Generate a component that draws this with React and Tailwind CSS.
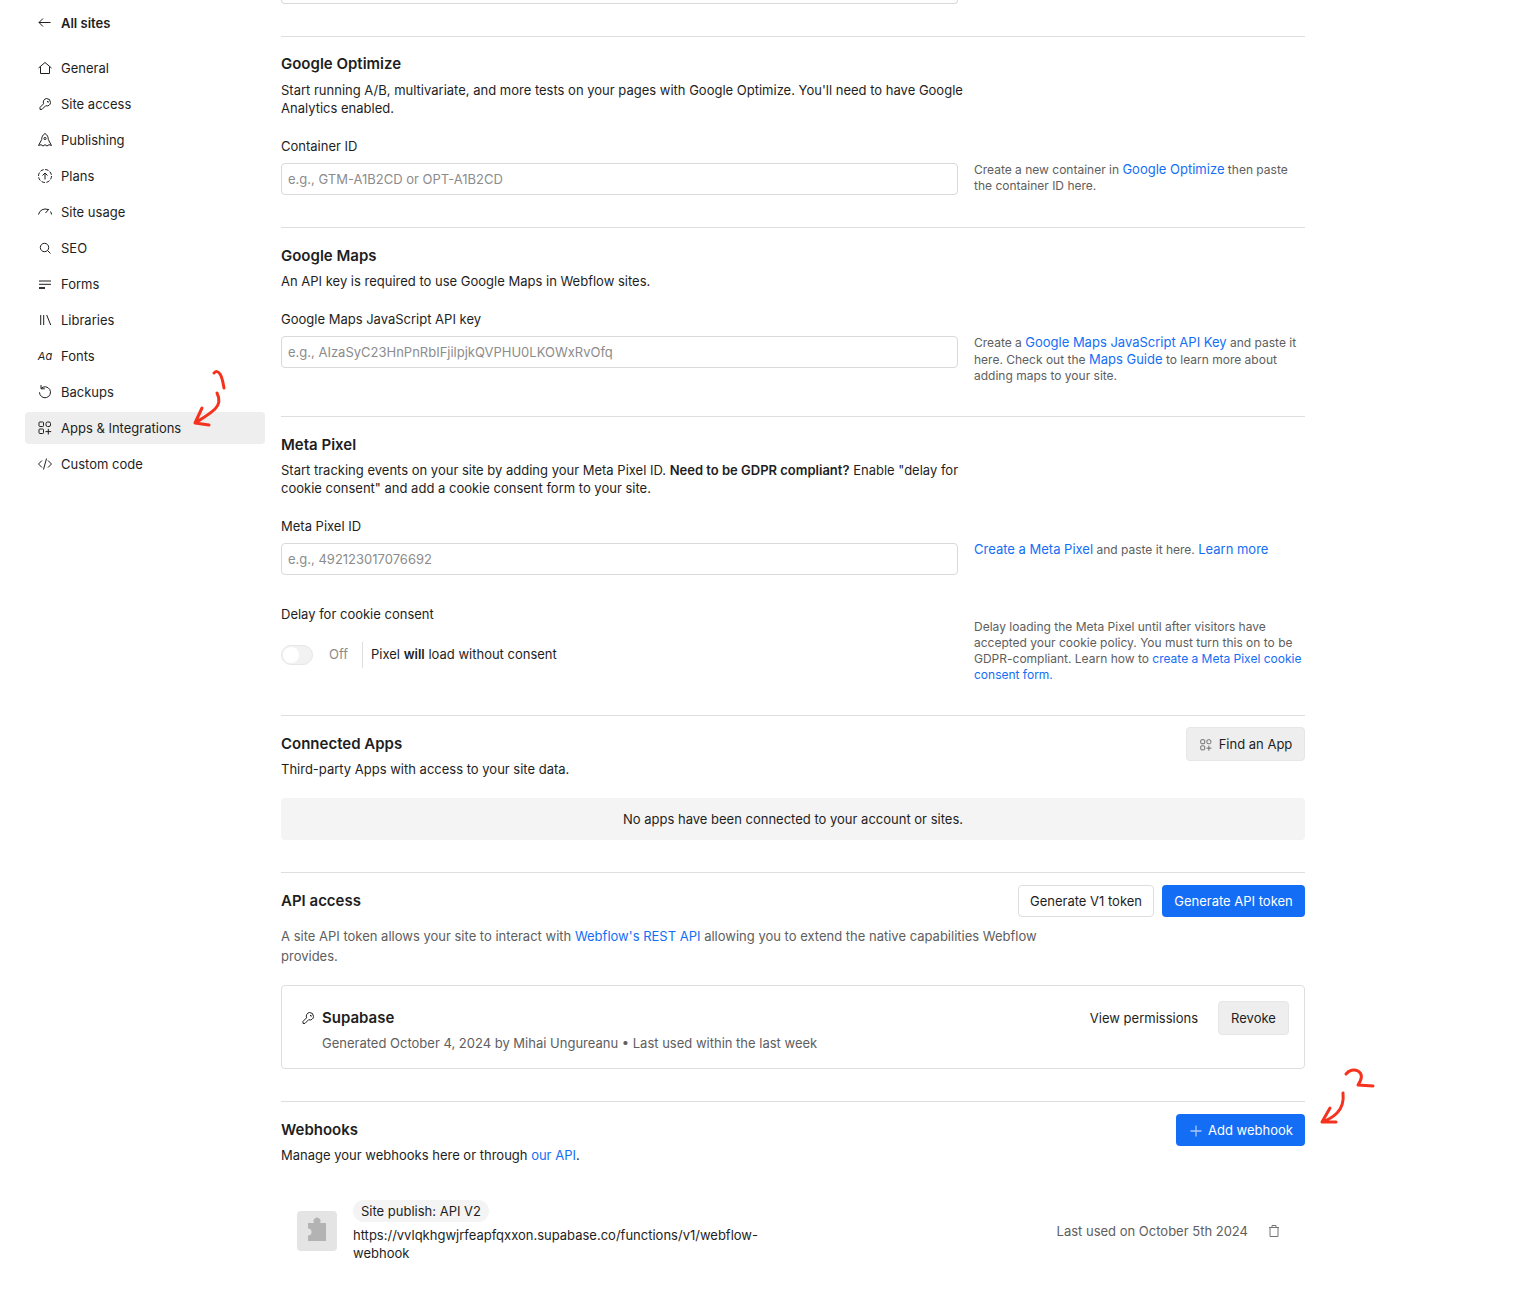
import React from 'react';

const Icon = ({ children, className = 'w-4 h-4' }) => (
  <svg viewBox="0 0 16 16" fill="none" stroke="currentColor" strokeWidth="1" className={`${className} shrink-0`}>
    {children}
  </svg>
);

const BackIcon = () => (
  <Icon><path d="M13.5 7.5H2M6 3.5l-4 4 4 4" /></Icon>
);
const HomeIcon = () => (
  <Icon><path d="M1.5 8L8 2.5 14.5 8M3.5 7v6.5h9V7" /></Icon>
);
const KeyIcon = () => (
  <Icon>
    <path d="M9.5 2.5a4 4 0 0 1 4 4 3.5 3.5 0 0 1-4.8 3.2L5 13.4H3v-2l3.6-3.6A3.8 3.8 0 0 1 9.5 2.5z" />
    <path d="M10 5.5h1.2v1.2" />
  </Icon>
);
const RocketIcon = () => (
  <Icon>
    <path d="M8 1.5c2.4 1.4 3.3 3.6 3.3 6l3.2 6-2.5-.8-2 1.3-2-1.3-2 1.3-2-1.3-2.5.8 3.2-6c0-2.4.9-4.6 3.3-6z" />
    <circle cx="8" cy="6.5" r="1.1" />
  </Icon>
);
const PlansIcon = () => (
  <Icon>
    <circle cx="8" cy="8" r="6.5" strokeDasharray="3.5 1.5" />
    <path d="M8 11.5V5M5.5 7.5L8 5l2.5 2.5" />
  </Icon>
);
const UsageIcon = () => (
  <Icon>
    <path d="M1.5 10.5a7 7 0 0 1 9.5-5" />
    <path d="M14.5 10.5a7 7 0 0 0-1-3M8.5 9L12 5" />
  </Icon>
);
const SearchIcon = () => (
  <Icon><circle cx="7.5" cy="7.5" r="4.2" /><path d="M10.5 10.5L13.5 13.5" /></Icon>
);
const FormsIcon = () => (
  <Icon>
    <path d="M2 5h12M2 8.3h12" />
    <path d="M2 12h6" strokeWidth="1.8" />
  </Icon>
);
const LibraryIcon = () => (
  <Icon><path d="M3.7 3v10M6.7 3v10M9.7 3l4 10" /></Icon>
);
const BackupIcon = () => (
  <Icon>
    <path d="M4 4.5a5.5 5.5 0 1 1-1.5 3.8" />
    <path d="M4 1v3.8h3.8" />
  </Icon>
);
const AppsIcon = ({ className = 'w-4 h-4' }) => (
  <Icon className={className}>
    <rect x="2" y="2" width="4.5" height="4.5" rx=".8" />
    <rect x="9" y="2" width="4.5" height="4.5" rx="1.5" />
    <rect x="2" y="9" width="4.5" height="4.5" rx=".8" />
    <path d="M11.3 8.8v5.7M8.5 11.6h5.7" />
  </Icon>
);
const CodeIcon = () => (
  <Icon><path d="M5 4.5L1.5 8 5 11.5M11 4.5L14.5 8 11 11.5M9.500 2.5L6.5 13.5" /></Icon>
);
const PlusIcon = () => (
  <Icon><path d="M8 2.5v11M2.5 8h11" strokeWidth="1.3" /></Icon>
);
const TrashIcon = () => (
  <Icon>
    <path d="M4 5v8.5h8V5M3 4.5h10M6 4.5v-2h4v2" />
  </Icon>
);

const nav = [
  ['General', HomeIcon],
  ['Site access', KeyIcon],
  ['Publishing', RocketIcon],
  ['Plans', PlansIcon],
  ['Site usage', UsageIcon],
  ['SEO', SearchIcon],
  ['Forms', FormsIcon],
  ['Libraries', LibraryIcon],
  ['Fonts', null],
  ['Backups', BackupIcon],
  ['Apps & Integrations', AppsIcon],
  ['Custom code', CodeIcon],
];

const Sidebar = () => (
  <aside className="w-[281px] shrink-0 pl-[25px] pt-[7px]">
    <div className="w-[240px] h-8 flex items-center gap-2 pl-3 mb-[13px] font-semibold">
      <BackIcon />
      <span className="pt-px">All sites</span>
    </div>
    <nav className="w-[240px] flex flex-col gap-1">
      {nav.map(([label, NavIcon]) => (
        <div
          key={label}
          className={`h-8 flex items-center gap-2 pl-3 rounded ${label === 'Apps & Integrations' ? 'bg-[#eeeeee]' : ''}`}
        >
          {NavIcon ? (
            <NavIcon />
          ) : (
            <span className="w-4 h-4 shrink-0 text-[11px] leading-4 italic text-center">Aa</span>
          )}
          <span className="pt-px">{label}</span>
        </div>
      ))}
    </nav>
  </aside>
);

const Title = ({ children }) => <h2 className="text-[15px] leading-5 font-semibold">{children}</h2>;

const Link = ({ children }) => <a className="text-[#146ef5] text-[13px]">{children}</a>;

const Help = ({ children }) => (
  <p className="w-[331px] text-[12px] leading-4 text-[#5e5e5e]">{children}</p>
);

const Field = ({ label, placeholder, help }) => (
  <>
    <label className="block mt-5 leading-[18px]">{label}</label>
    <div className="flex gap-4 mt-2">
      <div className="w-[677px] h-8 shrink-0 flex items-center px-[6px] pt-px border border-[#d9d9d9] rounded text-[#8c8c8c]">
        {placeholder}
      </div>
      <div className="-mt-[2px]">{help}</div>
    </div>
  </>
);

const Section = ({ children, className = '' }) => (
  <section className={`border-t border-[#dedede] ${className}`}>{children}</section>
);

// hand-drawn red arrows that sit on top of the screenshot
const Annotations = () => (
  <svg
    className="absolute top-0 left-0 w-[1514px] h-[1310px] pointer-events-none"
    viewBox="0 0 1514 1310"
    fill="none"
    stroke="#f5321e"
    strokeWidth="3"
    strokeLinecap="round"
    strokeLinejoin="round"
  >
    <path d="M214 373c2-2 4-2 6 1 2 3 3 8 4 14" />
    <path d="M217 393c3 6 3 11-2 16-5 5-12 9-20 14M202 408l-7 15 14 2" />
    <path d="M1346 1074c3-4 8-5 12-3 5 3 4 8 0 14l15 1" />
    <path d="M1343 1093c1 9-1 15-6 20-4 4-9 7-15 9M1330 1108l-8 14 14 0" />
  </svg>
);

export default function App() {
  return (
    <div className="relative w-[1514px] h-[1310px] overflow-hidden bg-white text-[13px] text-[#1e1e1e] font-['Inter',sans-serif] flex">
      <Sidebar />
      <main className="w-[1024px] shrink-0">
        <div className="w-[677px] h-1 border border-t-0 border-[#d9d9d9] rounded-b mb-8" />

        <Section className="pt-[17px] pb-8">
          <Title>Google Optimize</Title>
          <p className="w-[690px] mt-[7px] leading-[18px]">
            Start running A/B, multivariate, and more tests on your pages with Google Optimize. You'll need to have Google Analytics enabled.
          </p>
          <Field
            label="Container ID"
            placeholder="e.g., GTM-A1B2CD or OPT-A1B2CD"
            help={<Help>Create a new container in <Link>Google Optimize</Link> then paste the container ID here.</Help>}
          />
        </Section>

        <Section className="pt-[18px] pb-8">
          <Title>Google Maps</Title>
          <p className="mt-[6px] leading-[18px]">An API key is required to use Google Maps in Webflow sites.</p>
          <Field
            label="Google Maps JavaScript API key"
            placeholder="e.g., AIzaSyC23HnPnRbIFjilpjkQVPHU0LKOWxRvOfq"
            help={<Help>Create a <Link>Google Maps JavaScript API Key</Link> and paste it here. Check out the <Link>Maps Guide</Link> to learn more about adding maps to your site.</Help>}
          />
        </Section>

        <Section className="pt-[18px] pb-8">
          <Title>Meta Pixel</Title>
          <p className="w-[690px] mt-[6px] leading-[18px]">
            Start tracking events on your site by adding your Meta Pixel ID. <b className="font-semibold">Need to be GDPR compliant?</b> Enable "delay for cookie consent" and add a cookie consent form to your site.
          </p>
          <Field
            label="Meta Pixel ID"
            placeholder="e.g., 492123017076692"
            help={<Help>
              <Link>Create a Meta Pixel</Link> and paste it here. <Link>Learn more</Link>
            </Help>}
          />
          <div className="flex gap-4 mt-[30px]">
            <div className="w-[677px] shrink-0">
              <div className="leading-[18px]">Delay for cookie consent</div>
              <div className="flex items-center mt-[19px] h-[26px]">
                <div className="w-8 h-5 rounded-full bg-[#f2f2f2] border border-[#e6e6e6] p-px">
                  <div className="w-4 h-4 rounded-full bg-white" />
                </div>
                <span className="ml-4 w-[33px] text-[#8c8c8c]">Off</span>
                <div className="w-px h-[26px] bg-[#dedede]" />
                <span className="ml-2">Pixel <b className="font-semibold">will</b> load without consent</span>
              </div>
            </div>
            <div className="pt-[14px]">
              <Help>
                Delay loading the Meta Pixel until after visitors have accepted your cookie policy. You must turn this on to be GDPR-compliant. Learn how to <a className="text-[#146ef5]">create a Meta Pixel cookie consent form.</a>
              </Help>
            </div>
          </div>
        </Section>

        <Section className="pt-[11px] pb-8">
          <div className="flex items-center justify-between">
            <Title>Connected Apps</Title>
            <button className="h-[34px] w-[119px] pt-px flex items-center justify-center gap-[6px] bg-[#eeeeee] border border-[#e6e6e6] rounded">
              <AppsIcon className="w-[14px] h-[14px] text-[#5e5e5e]" />
              Find an App
            </button>
          </div>
          <p className="-mt-px leading-[18px]">Third-party Apps with access to your site data.</p>
          <div className="mt-5 h-[42px] pt-px flex items-center justify-center bg-[#f4f4f4] rounded">
            No apps have been connected to your account or sites.
          </div>
        </Section>

        <Section className="pt-3 pb-8">
          <div className="flex items-center justify-between">
            <Title>API access</Title>
            <div className="flex gap-2">
              <button className="h-8 w-[136px] pt-px bg-white border border-[#dedede] rounded">Generate V1 token</button>
              <button className="h-8 w-[143px] pt-px bg-[#146ef5] text-white rounded">Generate API token</button>
            </div>
          </div>
          <p className="w-[775px] mt-[9px] leading-5 text-[#5e5e5e]">
            A site API token allows your site to interact with <Link>Webflow's REST API</Link> allowing you to extend the native capabilities Webflow provides.
          </p>
          <div className="mt-[19px] h-[84px] border border-[#dedede] rounded flex items-start justify-between pl-[18px] pr-[15px] pt-[15px]">
            <div>
              <div className="flex items-center gap-[7px] h-[34px]">
                <KeyIcon />
                <span className="text-[15px] font-semibold -ml-px pt-px">Supabase</span>
              </div>
              <div className="ml-[22px] -mt-[2px] leading-5 text-[#5e5e5e]">
                Generated October 4, 2024 by Mihai Ungureanu • Last used within the last week
              </div>
            </div>
            <div className="flex items-center gap-5">
              <span className="pt-px">View permissions</span>
              <button className="h-[34px] w-[71px] pt-px bg-[#eeeeee] border border-[#e6e6e6] rounded">Revoke</button>
            </div>
          </div>
        </Section>

        <Section className="pt-3">
          <div className="flex items-center justify-between">
            <Title>Webhooks</Title>
            <button className="h-8 w-[129px] pt-px flex items-center justify-center gap-1 bg-[#146ef5] text-white rounded">
              <span className="text-[#a9c8fa]"><PlusIcon /></span>
              Add webhook
            </button>
          </div>
          <p className="leading-[18px]">Manage your webhooks here or through <Link>our API</Link>.</p>
          <div className="mt-9 flex items-center pl-4 pr-[23px]">
            <svg viewBox="0 0 40 40" className="w-10 h-10 shrink-0">
              <rect width="40" height="40" rx="4" fill="#e4e4e4" />
              <path
                fill="#b3b3b3"
                d="M11 12H17A3.5 3.5 0 1 1 23 12H29V30H11V24.5A3.5 3.5 0 0 0 11 17.5Z"
              />
            </svg>
            <div className="ml-4 w-[410px]">
              <span className="inline-block align-top h-[22px] leading-[22px] px-2 rounded-full bg-[#f4f4f4]">Site publish: API V2</span>
              <p className="mt-1 leading-[18px]">https://vvlqkhgwjrfeapfqxxon.supabase.co/functions/v1/webflow-webhook</p>
            </div>
            <span className="ml-auto pt-[2px] text-[#5e5e5e]">Last used on October 5th 2024</span>
            <span className="ml-[18px] text-[#757575]"><TrashIcon /></span>
          </div>
        </Section>
      </main>
      <Annotations />
    </div>
  );
}
